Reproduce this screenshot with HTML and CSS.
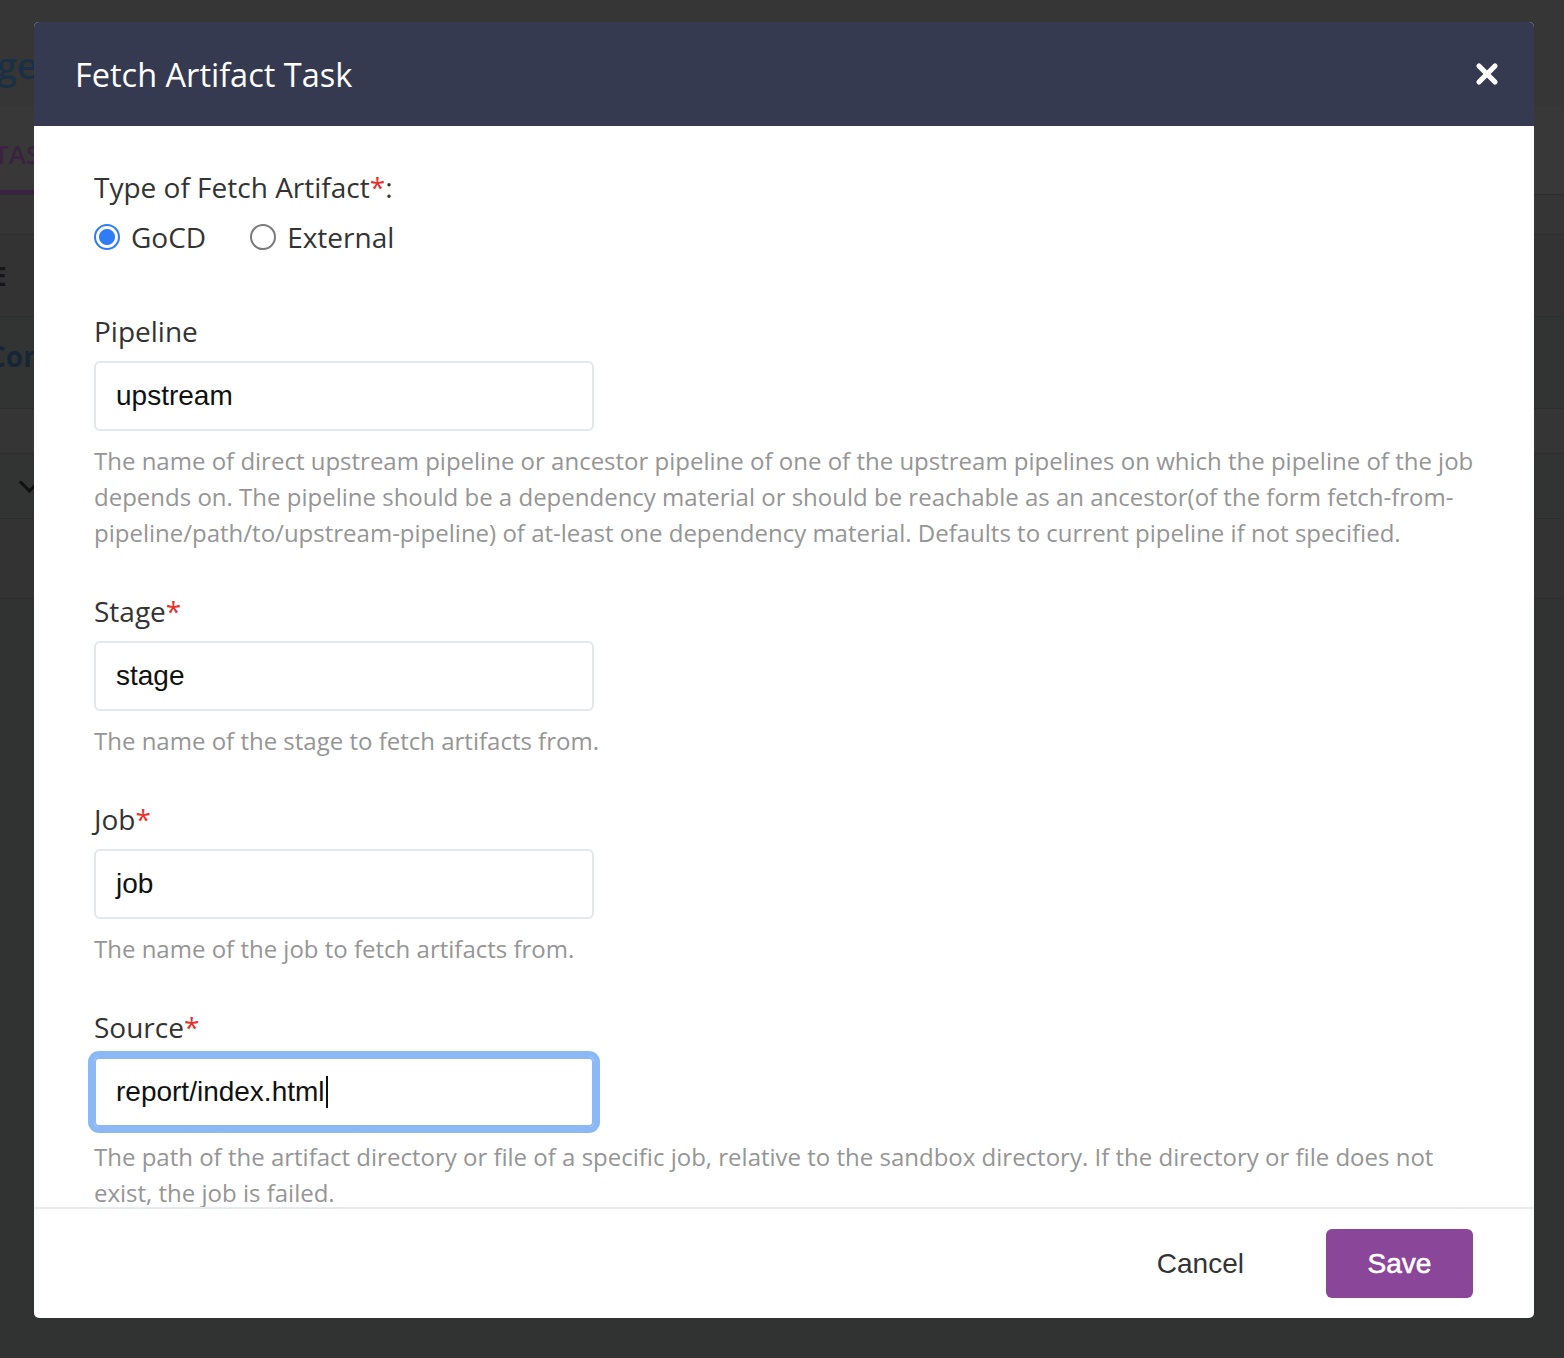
FILE: index.html
```html
<!DOCTYPE html>
<html lang="en">
<head>
<meta charset="utf-8">
<title>Fetch Artifact Task</title>
<link rel="stylesheet" href="styles.css">
</head>
<body>
<div class="page">
  <div class="page-top"><span class="page-title">Stage</span></div>
  <div class="page-tabs"><span class="tab">TASKS</span></div>
  <div class="page-row row-0"></div>
  <div class="page-row row-a"><span class="row-text">E</span></div>
  <div class="page-row row-b"><span class="row-name">Con</span></div>
  <div class="page-row row-c"></div>
  <div class="page-row row-d"><span class="chev"></span></div>
  <div class="page-row row-e"></div>
</div>

<div class="overlay">
  <div class="modal">
    <header class="modal-header">
      <h2 class="modal-title">Fetch Artifact Task</h2>
      <button class="close" aria-label="Close">
        <svg width="24" height="24" viewBox="0 0 24 24"><path d="M4 4 L20 20 M20 4 L4 20" stroke="#fff" stroke-width="5.2" stroke-linecap="round" fill="none"/></svg>
      </button>
    </header>

    <div class="modal-body">
      <div class="field field-type">
        <div class="label">Type of Fetch Artifact<span class="req">*</span>:</div>
        <div class="radios">
          <label class="radio"><span class="dot checked"></span><span>GoCD</span></label>
          <label class="radio"><span class="dot"></span><span>External</span></label>
        </div>
      </div>

      <div class="field">
        <div class="label">Pipeline</div>
        <div class="input">upstream</div>
        <div class="help">The name of direct upstream pipeline or ancestor pipeline of one of the upstream pipelines on which the pipeline of the job depends on. The pipeline should be a dependency material or should be reachable as an ancestor(of the form fetch-from-pipeline/path/to/upstream-pipeline) of at-least one dependency material. Defaults to current pipeline if not specified.</div>
      </div>

      <div class="field">
        <div class="label">Stage<span class="req">*</span></div>
        <div class="input">stage</div>
        <div class="help">The name of the stage to fetch artifacts from.</div>
      </div>

      <div class="field">
        <div class="label">Job<span class="req">*</span></div>
        <div class="input">job</div>
        <div class="help">The name of the job to fetch artifacts from.</div>
      </div>

      <div class="field">
        <div class="label">Source<span class="req">*</span></div>
        <div class="input focused">report/index.html<span class="caret"></span></div>
        <div class="help">The path of the artifact directory or file of a specific job, relative to the sandbox directory. If the directory or file does not exist, the job is failed.</div>
      </div>
    </div>

    <footer class="modal-footer">
      <button class="btn-cancel">Cancel</button>
      <button class="btn-save">Save</button>
    </footer>
  </div>
</div>
</body>
</html>
```

FILE: styles.css
```css
html, body {
  margin: 0;
  padding: 0;
}

body {
  width: 1564px;
  height: 1358px;
  overflow: hidden;
  position: relative;
  background: #313332;
  font-family: "Open Sans", "Noto Sans", sans-serif;
}

/* ---------- dimmed page behind the modal ---------- */
.page {
  display: flex;
  flex-direction: column;
  height: 100%;
}

.page-top {
  height: 106px;
  background: #363636;
  display: flex;
  align-items: center;
}

.page-title {
  font-size: 36px;
  font-weight: 600;
  color: #1b3044;
  margin-left: -58px;
  margin-top: 24px;
}

.page-tabs {
  height: 88px;
  background: #383838;
  display: flex;
  align-items: stretch;
}

.tab {
  font-size: 26px;
  font-weight: 600;
  color: #3a2240;
  margin-left: -6px;
  padding-top: 30px;
  width: 120px;
  box-sizing: border-box;
  border-bottom: 4px solid #3a2240;
}

.page-row {
  border-bottom: 1px solid #2c2e2d;
  display: flex;
  align-items: center;
}

.row-0 { height: 39px; background: #353535; border-top: 1px solid #2e2e2e; }
.row-a { height: 81px; background: #333; }
.row-b { height: 91px; background: #323433; }
.row-c { height: 44px; background: #353535; }
.row-d { height: 64px; background: #323433; }
.row-e { height: 79px; background: #333; }

.row-text {
  font-size: 26px;
  font-weight: 700;
  color: #161616;
  margin-left: -8px;
}

.row-name {
  font-size: 28px;
  font-weight: 700;
  color: #172636;
  margin-left: -12px;
  margin-top: -14px;
}

.chev {
  width: 12px;
  height: 12px;
  border-right: 3px solid #111;
  border-bottom: 3px solid #111;
  transform: rotate(45deg);
  margin-left: 22px;
  margin-top: -8px;
}

/* ---------- modal ---------- */
.overlay {
  position: absolute;
  inset: 0;
}

.modal {
  position: absolute;
  left: 34px;
  top: 22px;
  width: 1500px;
  height: 1296px;
  background: #fff;
  border-radius: 5px;
  overflow: hidden;
  display: flex;
  flex-direction: column;
}

.modal-header {
  height: 104px;
  flex: none;
  background: #353a50;
  display: flex;
  align-items: center;
  justify-content: space-between;
  padding: 0 34px 0 41px;
}

.modal-title {
  margin: 0;
  font-size: 32.5px;
  font-weight: 400;
  color: #fff;
  letter-spacing: 0;
}

.close {
  background: none;
  border: 0;
  padding: 0;
  width: 26px;
  height: 26px;
  display: flex;
  align-items: center;
  justify-content: center;
  cursor: pointer;
}

.modal-body {
  height: 1081px;
  flex: none;
  overflow: hidden;
  padding: 41px 56px 0 60px;
  box-sizing: border-box;
}

.field {
  margin-bottom: 40px;
}

.field-type {
  margin-bottom: 54px;
}

.label {
  font-size: 28px;
  line-height: 40px;
  color: #333;
  margin-bottom: 10px;
}

.req {
  color: #e5322d;
}

.radios {
  display: flex;
  align-items: center;
  gap: 44px;
  height: 40px;
  margin-top: 1px;
}

.radio {
  display: flex;
  align-items: center;
  gap: 11px;
  font-size: 28px;
  color: #333;
}

.dot {
  width: 26px;
  height: 26px;
  border-radius: 50%;
  box-sizing: border-box;
  border: 2px solid #7a7a7a;
  background: #fff;
  display: inline-block;
}

.dot.checked {
  border: 2px solid #2f7cf6;
  background: radial-gradient(circle, #2f7cf6 0 7.5px, #fff 8.5px);
}

.input {
  width: 500px;
  height: 70px;
  box-sizing: border-box;
  border: 2px solid #e3e7ec;
  border-radius: 6px;
  padding: 0 20px;
  display: flex;
  align-items: center;
  font-family: "Liberation Sans", Arial, sans-serif;
  font-size: 28px;
  color: #111;
}

.input.focused {
  border-color: #8cb9f6;
  box-shadow: 0 0 0 6px #8cb9f6;
  border-radius: 5px;
}

.caret {
  display: inline-block;
  width: 2px;
  height: 32px;
  background: #111;
  margin-left: 1px;
}

.help {
  margin-top: 12px;
  font-size: 24px;
  line-height: 36px;
  color: #959595;
}

/* ---------- footer ---------- */
.modal-footer {
  flex: 1;
  border-top: 2px solid #e8ebee;
  display: flex;
  align-items: center;
  justify-content: flex-end;
  padding: 0 61px 0 0;
  gap: 70px;
}

.btn-cancel {
  background: none;
  border: 0;
  font-family: "Liberation Sans", Arial, sans-serif;
  font-size: 28px;
  color: #333;
  padding: 0 12px;
  height: 69px;
  margin-top: 0;
}

.btn-save {
  width: 147px;
  height: 69px;
  background: #8a4698;
  border: 0;
  border-radius: 6px;
  color: #fff;
  font-family: "Liberation Sans", Arial, sans-serif;
  font-size: 28px;
  -webkit-text-stroke: 0.6px #fff;
  margin-top: 0;
}
```
